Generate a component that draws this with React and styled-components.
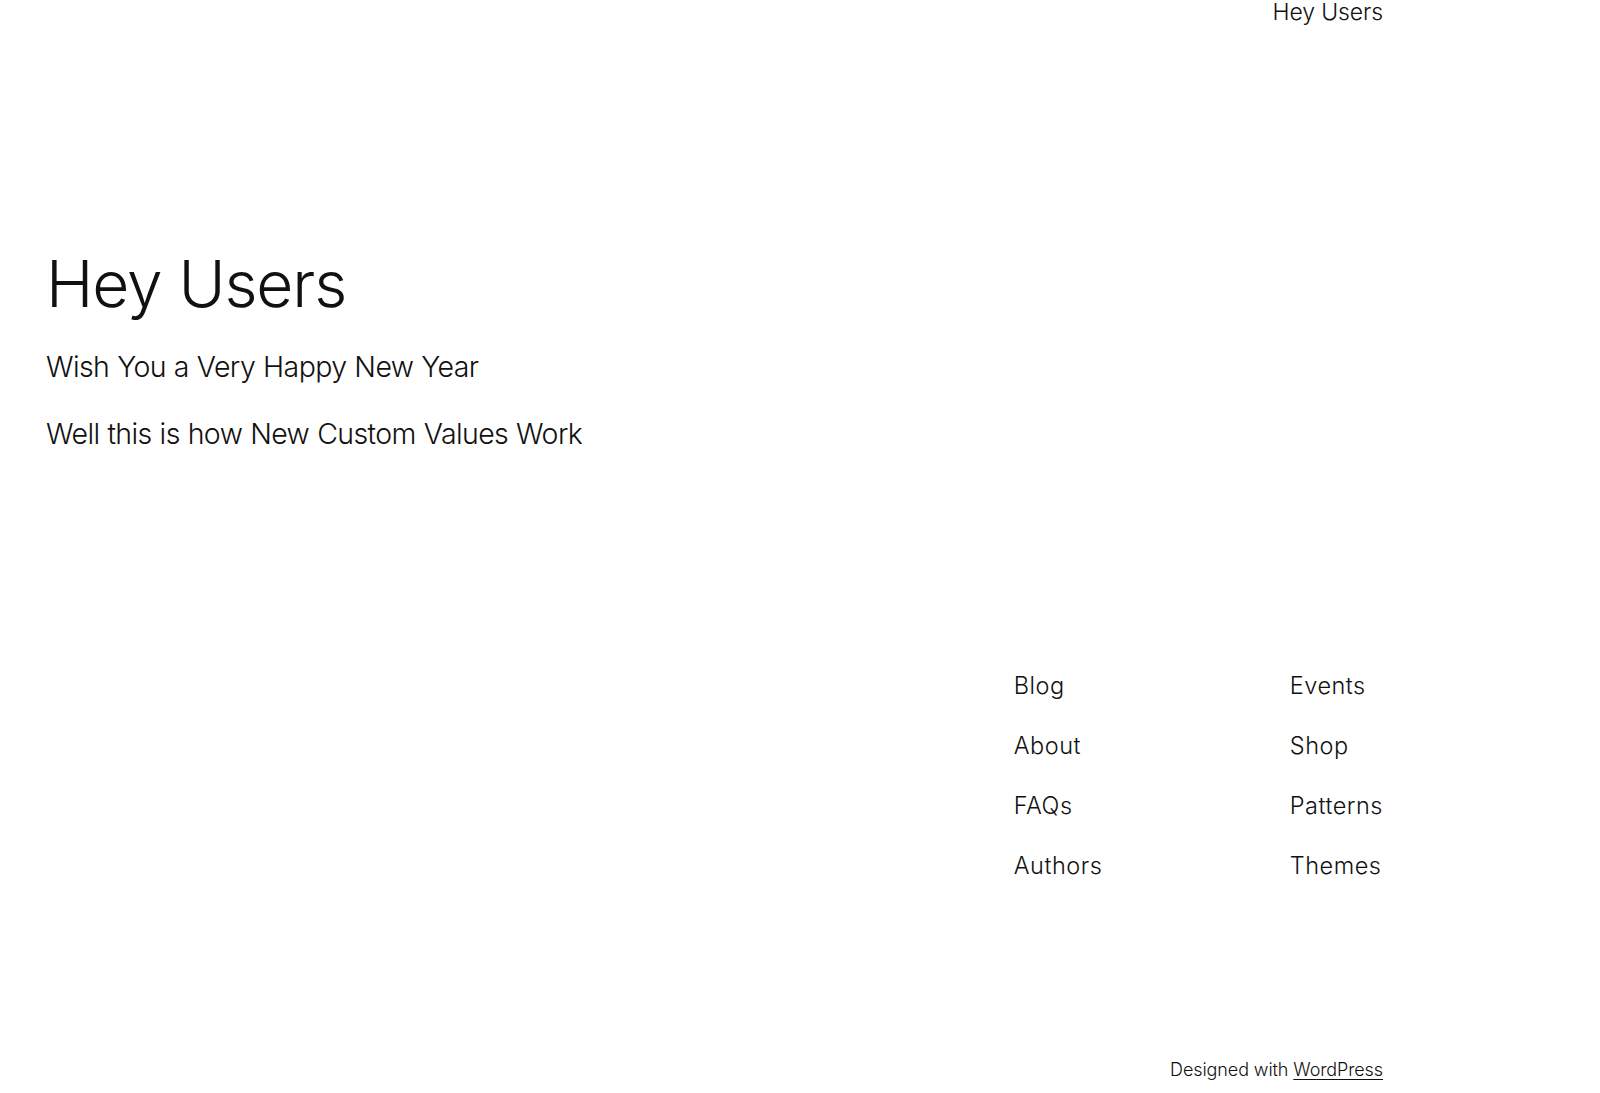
import styled, { createGlobalStyle } from "styled-components";

const GlobalStyle = createGlobalStyle`
  html, body {
    margin: 0;
    padding: 0;
    background: #ffffff;
  }
  body {
    font-family: Inter, "Noto Sans", "Liberation Sans", sans-serif;
    font-weight: 300;
    color: #111111;
    -webkit-font-smoothing: antialiased;
  }
`;

const Page = styled.div`
  display: flex;
  flex-direction: column;
  min-height: 1093px;
  padding: 0 217px 0 46px;
  box-sizing: border-box;
`;

const Header = styled.header`
  display: flex;
  justify-content: flex-end;
`;

const SiteTitle = styled.a`
  font-size: 23px;
  line-height: 1.1;
  color: #111111;
  text-decoration: none;
  letter-spacing: -0.1px;
`;

const Main = styled.main`
  display: flex;
  flex-direction: column;
  padding-top: 221px;
`;

const Title = styled.h1`
  margin: 0 0 24px;
  font-size: 64px;
  font-weight: 300;
  line-height: 1.2;
  letter-spacing: -1.1px;
`;

const Body = styled.div`
  display: flex;
  flex-direction: column;
  gap: 27px;
`;

const Para = styled.p`
  margin: 0;
  font-size: 28.5px;
  line-height: 1.4;
  letter-spacing: -0.6px;
  word-spacing: 0.5px;
`;

const Footer = styled.footer`
  display: flex;
  flex-direction: column;
  align-items: flex-end;
  padding-top: 216px;
`;

const NavColumns = styled.nav`
  display: grid;
  grid-template-columns: 276px auto;
`;

const NavList = styled.ul`
  list-style: none;
  margin: 0;
  padding: 0;
  display: flex;
  flex-direction: column;
  gap: 27.3px;
`;

const NavLink = styled.a`
  font-size: 23.5px;
  line-height: 1.4;
  color: #111111;
  text-decoration: none;
  letter-spacing: 0.5px;
`;

const Credit = styled.p`
  margin: 174px 0 0;
  font-size: 18px;
  line-height: 1.4;
  letter-spacing: -0.1px;

  a {
    color: #111111;
    text-decoration: underline;
    text-decoration-thickness: 1px;
    text-underline-offset: 3px;
  }
`;

const columns = [
  ["Blog", "About", "FAQs", "Authors"],
  ["Events", "Shop", "Patterns", "Themes"],
];

export default function App() {
  return (
    <>
      <GlobalStyle />
      <Page>
        <Header>
          <SiteTitle href="#">Hey Users</SiteTitle>
        </Header>
        <Main>
          <Title>Hey Users</Title>
          <Body>
            <Para>Wish You a Very Happy New Year</Para>
            <Para>Well this is how New Custom Values Work</Para>
          </Body>
        </Main>
        <Footer>
          <NavColumns>
            {columns.map((col, i) => (
              <NavList key={i}>
                {col.map((item) => (
                  <li key={item}>
                    <NavLink href="#">{item}</NavLink>
                  </li>
                ))}
              </NavList>
            ))}
          </NavColumns>
          <Credit>
            Designed with <a href="#">WordPress</a>
          </Credit>
        </Footer>
      </Page>
    </>
  );
}
